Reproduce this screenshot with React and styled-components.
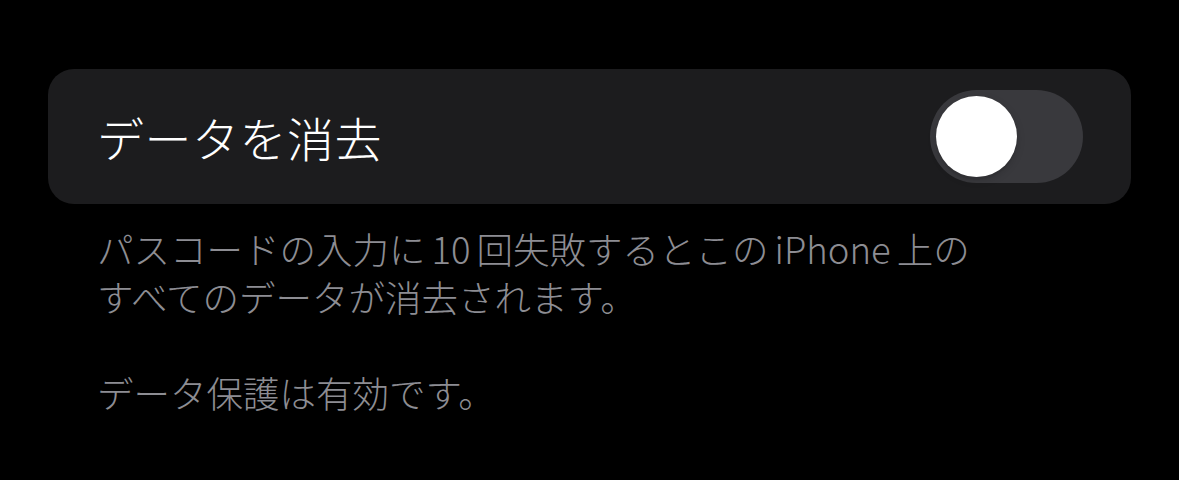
import React from 'react';
import styled, { createGlobalStyle } from 'styled-components';

const GlobalStyle = createGlobalStyle`
  html, body {
    margin: 0;
    padding: 0;
    background: #000;
  }
  body {
    font-family: "Noto Sans CJK JP", "Noto Sans", sans-serif;
    -webkit-font-smoothing: antialiased;
  }
`;

const Page = styled.div`
  width: 1179px;
  height: 480px;
  background: #000;
  padding: 69px 48px 0;
  box-sizing: border-box;
  display: flex;
  flex-direction: column;
`;

const Card = styled.div`
  height: 135px;
  background: #1c1c1e;
  border-radius: 26px;
  display: flex;
  align-items: center;
  justify-content: space-between;
  padding: 0 48px 0 49px;
`;

const Title = styled.span`
  color: #fff;
  font-size: 47px;
  font-weight: 300;
  letter-spacing: 0.5px;
`;

const Track = styled.div`
  width: 153px;
  height: 93px;
  border-radius: 47px;
  background: ${p => (p.on ? '#34c759' : '#39393d')};
  display: flex;
  align-items: center;
  justify-content: ${p => (p.on ? 'flex-end' : 'flex-start')};
  padding: 0 6px;
  box-sizing: border-box;
`;

const Knob = styled.div`
  width: 81px;
  height: 81px;
  border-radius: 50%;
  background: #fff;
  box-shadow: 0 3px 8px rgba(0, 0, 0, 0.15), 0 3px 1px rgba(0, 0, 0, 0.06);
`;

const Footer = styled.div`
  padding: 21px 0 0 49px;
  color: #8d8d93;
  font-size: 36.5px;
  font-weight: 300;
  line-height: 48px;
`;

const Para = styled.p`
  margin: 0 0 48px;
`;

const Gap = styled.span`
  margin-left: 6px;
`;

const Toggle = ({ on }) => (
  <Track on={on ? 1 : 0}>
    <Knob />
  </Track>
);

const App = () => (
  <Page>
    <GlobalStyle />
    <Card>
      <Title>データを消去</Title>
      <Toggle on={false} />
    </Card>
    <Footer>
      <Para>
        パスコードの入力に<Gap />10<Gap />回失敗するとこの<Gap />iPhone<Gap />上の
        <br />
        すべてのデータが消去されます。
      </Para>
      <Para>データ保護は有効です。</Para>
    </Footer>
  </Page>
);

export default App;
